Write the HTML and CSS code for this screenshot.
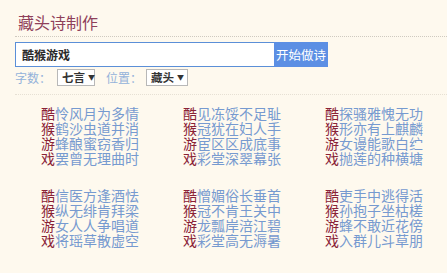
FILE: index.html
```html
<!DOCTYPE html>
<html lang="zh">
<head>
<meta charset="utf-8">
<link rel="stylesheet" href="styles.css">
</head>
<body>
<div class="page">
  <h1 class="title">藏头诗制作</h1>
  <div class="form">
    <div class="search">
      <div class="input">酷猴游戏</div>
      <div class="btn">开始做诗</div>
    </div>
    <div class="opts">
      <span class="lbl">字数：</span>
      <span class="sel sel1">七言<i>▼</i></span>
      <span class="lbl lbl2">位置：</span>
      <span class="sel sel2">藏头<i>▼</i></span>
    </div>
  </div>
  <div class="poems">
    <div class="poem">
      <div><b>酷</b>怜风月为多情</div>
      <div><b>猴</b>鹤沙虫道并消</div>
      <div><b>游</b>蜂酿蜜窃香归</div>
      <div><b>戏</b>罢曾无理曲时</div>
    </div>
    <div class="poem">
      <div><b>酷</b>见冻馁不足耻</div>
      <div><b>猴</b>冠犹在妇人手</div>
      <div><b>游</b>宦区区成底事</div>
      <div><b>戏</b>彩堂深翠幕张</div>
    </div>
    <div class="poem">
      <div><b>酷</b>探骚雅愧无功</div>
      <div><b>猴</b>形亦有上麒麟</div>
      <div><b>游</b>女谩能歌白纻</div>
      <div><b>戏</b>抛莲的种横塘</div>
    </div>
    <div class="poem">
      <div><b>酷</b>信医方逢酒怯</div>
      <div><b>猴</b>纵无绯肯拜梁</div>
      <div><b>游</b>女人人争唱道</div>
      <div><b>戏</b>将瑶草散虚空</div>
    </div>
    <div class="poem">
      <div><b>酷</b>憎媚俗长垂首</div>
      <div><b>猴</b>冠不肯王关中</div>
      <div><b>游</b>龙瓢岸涪江碧</div>
      <div><b>戏</b>彩堂高无溽暑</div>
    </div>
    <div class="poem">
      <div><b>酷</b>吏手中逃得活</div>
      <div><b>猴</b>孙抱子坐枯槎</div>
      <div><b>游</b>蜂不敢近花傍</div>
      <div><b>戏</b>入群儿斗草朋</div>
    </div>
  </div>
</div>
</body>
</html>
```
FILE: styles.css
```css
html, body {
  margin: 0;
  padding: 0;
  background: #fef9ee;
}
body {
  font-family: "Noto Sans CJK SC", "Noto Sans", sans-serif;
  width: 447px;
  height: 273px;
  overflow: hidden;
}
.page {
  padding-left: 15px;
}
.title {
  margin: 0;
  padding: 11px 0 3px 3px;
  font-size: 16px;
  line-height: 22px;
  font-weight: normal;
  color: #8f405a;
  border-bottom: 1px dotted #cfcac0;
}
.form {
  padding-top: 5px;
  padding-bottom: 8px;
  border-bottom: 1px dotted #e6e0d4;
}
.search {
  display: flex;
  height: 25px;
}
.input {
  box-sizing: border-box;
  width: 259px;
  height: 25px;
  border: 1px solid #5b8fd8;
  border-right: none;
  background: #fff;
  padding-left: 6px;
  font-size: 12px;
  line-height: 23px;
  font-weight: bold;
  color: #2a2a2a;
}
.btn {
  width: 54px;
  height: 25px;
  background: #5c8fe4;
  color: #fff;
  font-size: 12.5px;
  line-height: 25px;
  text-align: center;
}
.opts {
  display: flex;
  align-items: center;
  height: 18px;
  margin-top: 1px;
  font-size: 12px;
  white-space: nowrap;
}
.lbl {
  color: #93b2da;
  width: 42px;
}
.lbl2 {
  margin-left: 11px;
  width: 40px;
}
.sel {
  box-sizing: border-box;
  display: flex;
  align-items: center;
  justify-content: space-between;
  height: 17px;
  padding: 0 3px 0 4px;
  background: #fff;
  border: 1px solid #b8b8b8;
  font-weight: bold;
  color: #333;
  font-size: 11.5px;
  line-height: 15px;
  white-space: nowrap;
}
.sel i {
  font-style: normal;
  font-size: 7px;
  color: #333;
  margin-left: 3px;
}
.sel1 { width: 38px; }
.sel2 { width: 42px; }
.poems {
  display: grid;
  grid-template-columns: 142px 142px 142px;
  row-gap: 22px;
  padding-left: 26px;
  padding-top: 11px;
}
.poem {
  font-size: 14px;
  line-height: 15px;
  color: #769ad0;
  white-space: nowrap;
}
.poem b {
  font-weight: normal;
  color: #8a2236;
}
```
